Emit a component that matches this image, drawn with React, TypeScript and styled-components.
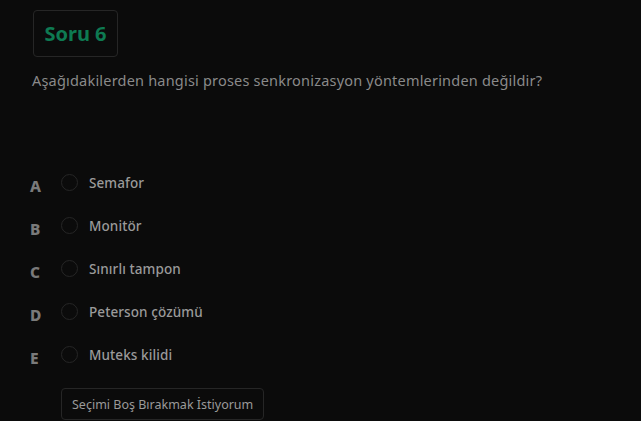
import React from "react";
import styled, { createGlobalStyle } from "styled-components";

const Global = createGlobalStyle`
  html, body { margin: 0; padding: 0; background: #0b0b0b; }
  body { font-family: "Noto Sans", "Open Sans", sans-serif; }
`;

const Page = styled.div`
  width: 641px;
  height: 421px;
  overflow: hidden;
  padding: 10px 0 0 30px;
  box-sizing: border-box;
  background: #0b0b0b;
`;

const TitleBox = styled.div`
  display: inline-flex;
  align-items: center;
  justify-content: center;
  margin-left: 3px;
  width: 85px;
  height: 47px;
  box-sizing: border-box;
  border: 1px solid #262626;
  border-radius: 4px;
  color: #0e7a52;
  font-weight: 700;
  font-size: 20px;
`;

const Question = styled.p`
  margin: 13px 0 0 2px;
  color: #8a8a8a;
  font-size: 14.5px;
  letter-spacing: 0.2px;
  line-height: 20px;
`;

const Options = styled.div`
  display: flex;
  flex-direction: column;
  margin-top: 71px;
`;

const Row = styled.div`
  display: flex;
  align-items: center;
  height: 43px;
`;

const Letter = styled.span`
  width: 31px;
  color: #7a7a7a;
  font-weight: 800;
  font-size: 15.5px;
  padding-top: 6px;
`;

const Radio = styled.span`
  width: 17px;
  height: 17px;
  box-sizing: border-box;
  border: 1px solid #262626;
  border-radius: 50%;
`;

const Label = styled.span`
  margin-left: 11px;
  color: #9a9a9a;
  font-size: 13.5px;
  font-weight: 500;
  letter-spacing: 0.1px;
`;

const SkipButton = styled.button`
  margin: 12px 0 0 31px;
  align-self: flex-start;
  height: 32px;
  padding: 0 10px;
  background: transparent;
  border: 1px solid #262626;
  border-radius: 4px;
  color: #9a9a9a;
  font-family: "Noto Sans", "Open Sans", sans-serif;
  font-size: 12.5px;
`;

const options = [
  ["A", "Semafor"],
  ["B", "Monitör"],
  ["C", "Sınırlı tampon"],
  ["D", "Peterson çözümü"],
  ["E", "Muteks kilidi"],
];

export default function App() {
  return (
    <Page>
      <Global />
      <TitleBox>Soru 6</TitleBox>
      <Question>Aşağıdakilerden hangisi proses senkronizasyon yöntemlerinden değildir?</Question>
      <Options>
        {options.map(([l, t]) => (
          <Row key={l}>
            <Letter>{l}</Letter>
            <Radio />
            <Label>{t}</Label>
          </Row>
        ))}
        <SkipButton>Seçimi Boş Bırakmak İstiyorum</SkipButton>
      </Options>
    </Page>
  );
}
